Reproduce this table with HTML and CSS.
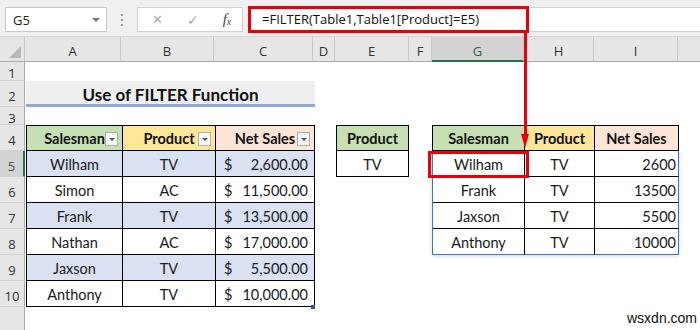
FILE: index.html
```html
<!DOCTYPE html>
<html>
<head>
<meta charset="utf-8">
<link rel="stylesheet" href="styles.css">
</head>
<body>
<div class="app">
  <div class="toolbar">
    <div class="namebox"><span>G5</span><span class="nb-arrow"></span></div>
    <div class="dots"><i></i><i></i><i></i></div>
    <div class="fxbox">
      <span class="fx-x">&#x2715;</span>
      <span class="fx-check">&#x2713;</span>
      <span class="fx-f">f<sub>x</sub></span>
    </div>
    <div class="formula">=FILTER(Table1,Table1[Product]=E5)</div>
  </div>

  <div class="sheet">
    <div class="corner"><span class="corner-tri"></span></div>
    <div class="colh">A</div>
    <div class="colh">B</div>
    <div class="colh">C</div>
    <div class="colh">D</div>
    <div class="colh">E</div>
    <div class="colh">F</div>
    <div class="colh sel">G</div>
    <div class="colh">H</div>
    <div class="colh">I</div>
    <div class="colh last"></div>

    <div class="rowh r1">1</div>
    <div class="rowh r2">2</div>
    <div class="rowh r3">3</div>
    <div class="rowh r4">4</div>
    <div class="rowh r5 sel">5</div>
    <div class="rowh r6">6</div>
    <div class="rowh r7">7</div>
    <div class="rowh r8">8</div>
    <div class="rowh r9">9</div>
    <div class="rowh r10">10</div>
    <div class="rowh r11"></div>

    <div class="title">Use of FILTER Function</div>

    <div class="table1">
      <div class="th green">Salesman<span class="fbtn"></span></div>
      <div class="th yellow">Product<span class="fbtn"></span></div>
      <div class="th peach">Net Sales<span class="fbtn"></span></div>

      <div class="td band">Wilham</div><div class="td band">TV</div><div class="td band money"><span>$</span><span>2,600.00</span></div>
      <div class="td">Simon</div><div class="td">AC</div><div class="td money"><span>$</span><span>11,500.00</span></div>
      <div class="td band">Frank</div><div class="td band">TV</div><div class="td band money"><span>$</span><span>13,500.00</span></div>
      <div class="td">Nathan</div><div class="td">AC</div><div class="td money"><span>$</span><span>17,000.00</span></div>
      <div class="td band">Jaxson</div><div class="td band">TV</div><div class="td band money"><span>$</span><span>5,500.00</span></div>
      <div class="td">Anthony</div><div class="td">TV</div><div class="td money"><span>$</span><span>10,000.00</span></div>
      <span class="resize"></span>
    </div>

    <div class="crit">
      <div class="th green">Product</div>
      <div class="td">TV</div>
    </div>

    <div class="table2">
      <div class="th green">Salesman</div>
      <div class="th yellow">Product</div>
      <div class="th peach">Net Sales</div>
      <div class="spill">
        <div class="td">Wilham</div><div class="td">TV</div><div class="td num">2600</div>
        <div class="td">Frank</div><div class="td">TV</div><div class="td num">13500</div>
        <div class="td">Jaxson</div><div class="td">TV</div><div class="td num">5500</div>
        <div class="td">Anthony</div><div class="td">TV</div><div class="td num">10000</div>
      </div>
    </div>
  </div>

  <div class="redbox formula-red"></div>
  <div class="redbox cell-red"></div>
  <div class="arrow-line"></div>
  <div class="arrow-head"></div>
  <div class="watermark">wsxdn.com</div>
</div>
</body>
</html>
```

FILE: styles.css
```css
* { box-sizing: border-box; }
html, body { margin: 0; padding: 0; background: #fff; }
body { width: 700px; height: 330px; overflow: hidden; font-family: "Lato", "Open Sans", sans-serif; color: #000; }
.app { position: relative; width: 700px; height: 330px; overflow: hidden; }

/* toolbar */
.toolbar {
  height: 37px;
  background: #f0f0f0;
  display: flex;
  align-items: flex-start;
  padding-top: 7px;
  padding-left: 5px;
  border-bottom: 1px solid #d6d6d6;
}
.namebox {
  width: 102px; height: 25px;
  background: #fff;
  border: 1px solid #c8c8c8;
  display: flex; align-items: center; justify-content: space-between;
  padding: 0 6px 0 7px;
  font-family: "Open Sans", sans-serif; font-size: 13px; color: #222;
}
.nb-arrow { width: 0; height: 0; border-left: 4px solid transparent; border-right: 4px solid transparent; border-top: 4px solid #777; }
.dots { width: 30px; height: 25px; display: flex; flex-direction: column; align-items: center; justify-content: center; gap: 3px; }
.dots i { display: block; width: 2px; height: 2px; background: #a0a0a0; }
.fxbox {
  width: 106px; height: 25px;
  background: #fff;
  border: 1px solid #d0d0d0;
  display: flex; align-items: center;
  font-family: "DejaVu Sans", sans-serif;
  color: #a8a8a8;
}
.fx-x { font-size: 13px; margin-left: 14px; }
.fx-check { font-size: 14px; margin-left: 24px; }
.fx-f { font-family: "Liberation Serif", serif; font-style: italic; font-size: 15px; color: #444; margin-left: 24px; }
.fx-f sub { font-size: 10px; vertical-align: -1px; }
.formula {
  flex: 1; height: 25px; margin-left: 5px;
  background: #fff;
  border-top: 1px solid #d0d0d0; border-bottom: 1px solid #d0d0d0;
  font-family: "Open Sans", sans-serif; font-size: 13px; color: #111;
  padding-left: 14px; line-height: 23px; white-space: nowrap;
}

/* sheet grid */
.sheet {
  display: grid;
  grid-template-columns: 25px 96px 93px 99px 22px 74px 23px 92px 70px 84px 1fr;
  grid-template-rows: 25px 19px 26px 18px 26px 26px 26px 26px 26px 26px 26px 1fr;
  height: 293px;
}
.corner { grid-column: 1; grid-row: 1; background: #e6e6e6; border-right: 1px solid #c6c6c6; border-bottom: 1px solid #a8a8a8; position: relative; }
.corner-tri { position: absolute; right: 3px; bottom: 3px; width: 0; height: 0; border-left: 12px solid transparent; border-bottom: 12px solid #b8b8b8; }
.colh {
  grid-row: 1;
  background: #e6e6e6;
  border-right: 1px solid #c6c6c6;
  border-bottom: 1px solid #a8a8a8;
  font-family: "Open Sans", sans-serif; font-size: 13px; color: #333;
  display: flex; align-items: center; justify-content: center;
  padding-top: 3px;
}
.colh.sel { background: #d3d3d3; border-bottom: 2px solid #217346; color: #3d5d45; padding-top: 4px; }
.colh.last { border-right: none; }
.rowh {
  grid-column: 1;
  background: #e6e6e6;
  border-right: 1px solid #a8a8a8;
  border-bottom: 1px solid #d0d0d0;
  font-family: "Open Sans", sans-serif; font-size: 13px; color: #333;
  display: flex; align-items: center; justify-content: center;
  padding-top: 4px;
}
.rowh.sel { background: #d3d3d3; border-right: 2px solid #217346; color: #3d5d45; }
.rowh.r11 { border-bottom: none; }
.r1 { grid-row: 2; } .r2 { grid-row: 3; } .r3 { grid-row: 4; } .r4 { grid-row: 5; } .r5 { grid-row: 6; }
.r6 { grid-row: 7; } .r7 { grid-row: 8; } .r8 { grid-row: 9; } .r9 { grid-row: 10; } .r10 { grid-row: 11; } .r11 { grid-row: 12; }

.title {
  grid-column: 2 / 5; grid-row: 3;
  background: #efefef;
  border-bottom: 3px solid #8ea9db;
  margin-left: 1px; margin-right: -2px;
  display: flex; align-items: center; justify-content: center;
  font-weight: 700; font-size: 17px; color: #111;
  padding-top: 4px;
}

.th, .td {
  display: flex; align-items: center; justify-content: center;
  border-right: 1px solid #000; border-bottom: 1px solid #000;
  font-size: 14.5px; color: #1a1a1a;
  position: relative;
  padding-top: 2px;
}
.th { font-weight: 700; color: #111; border-top: 1px solid #000; padding-top: 1px; }
.green { background: #c6e0b4; }
.yellow { background: #ffe699; }
.peach { background: #fce4d6; }
.band { background: #d9e1f2; }

.table1 {
  grid-column: 2 / 5; grid-row: 5 / 12;
  display: grid;
  grid-template-columns: 96px 93px 99px;
  grid-template-rows: repeat(7, 26px);
  border-left: 1px solid #000;
  margin-left: 1px;
  position: relative;
}
.fbtn {
  position: absolute; right: 4px; bottom: 4px;
  width: 13px; height: 14px;
  background: #f6f6f6; border: 1px solid #b0b0b0;
}
.fbtn::after {
  content: ""; position: absolute; left: 3px; top: 5px;
  border-left: 3px solid transparent; border-right: 3px solid transparent; border-top: 3px solid #555;
}
.money { justify-content: space-between; padding: 2px 6px 0 8px; }
.resize { position: absolute; right: -2px; bottom: -2px; width: 4px; height: 4px; background: #2f5597; }

.crit {
  grid-column: 6; grid-row: 5 / 7;
  display: grid; grid-template-rows: 26px 26px;
  border-left: 1px solid #000;
  margin-left: 1px;
}

.table2 {
  grid-column: 8 / 11; grid-row: 5 / 10;
  display: grid;
  grid-template-columns: 92px 70px 84px;
  grid-template-rows: 26px 104px;
  border-left: 1px solid #000;
}
.spill {
  grid-column: 1 / 4;
  display: grid;
  grid-template-columns: 92px 70px 84px;
  grid-template-rows: repeat(4, 26px);
  margin-left: -1px;
  border-left: 1px solid #4472c4;
  box-shadow: 0 1px 4px rgba(0,0,0,0.18);
}
.spill .td:nth-child(3n) { border-right-color: #4472c4; }
.spill .td:nth-last-child(-n+3) { border-bottom-color: #4472c4; }
.num { justify-content: flex-end; padding-right: 2px; }

/* overlays */
.redbox { position: absolute; border: 3px solid #e8000b; }
.formula-red { left: 248px; top: 6px; width: 281px; height: 27px; }
.cell-red { left: 428px; top: 151px; width: 101px; height: 27px; }
.arrow-line { position: absolute; left: 524px; top: 32px; width: 3px; height: 104px; background: #e8000b; }
.arrow-head {
  position: absolute; left: 521px; top: 134px;
  width: 0; height: 0;
  border-left: 4.5px solid transparent; border-right: 4.5px solid transparent;
  border-top: 14px solid #e8000b;
}
.watermark { position: absolute; left: 627px; top: 310px; font-family: "Liberation Sans", Arial, sans-serif; font-size: 14px; color: #111; }
```
